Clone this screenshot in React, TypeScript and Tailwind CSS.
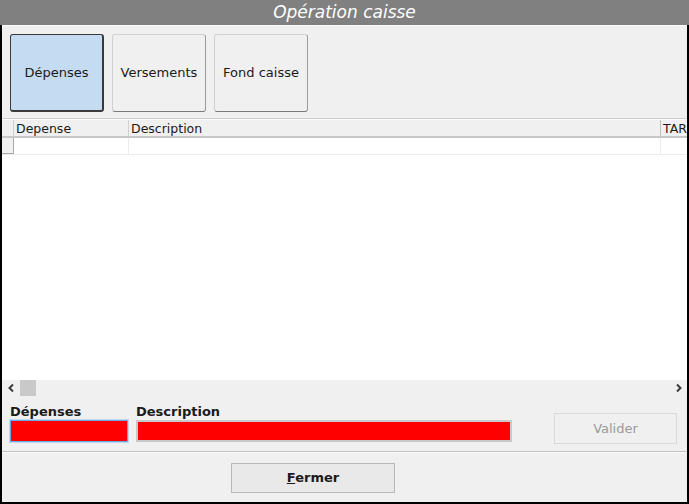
import React from "react";

const font = { fontFamily: '"DejaVu Sans", "Liberation Sans", sans-serif' };

const TabButton = ({ label, active }: { label: string; active?: boolean }) => (
  <button
    className={`w-[94px] h-[78px] rounded-[3px] text-[13px] text-[#1a1a1a] ${
      active
        ? "bg-[#c5dbf1] border border-[#3a3a3a] border-b-2 border-r-2"
        : "bg-[#f0f0f0] border border-[#d0d0d0] border-b-[#7a7a7a] border-r-[#9a9a9a]"
    }`}
  >
    {label}
  </button>
);

const Chevron = ({ dir }: { dir: "left" | "right" }) => (
  <svg width="8" height="10" viewBox="0 0 8 10">
    <polyline
      points={dir === "left" ? "6,1.5 2.5,5 6,8.5" : "2,1.5 5.5,5 2,8.5"}
      fill="none"
      stroke="#3c3c3c"
      strokeWidth="2"
    />
  </svg>
);

export default function App() {
  return (
    <div
      className="w-[689px] h-[504px] bg-black flex flex-col pl-[2px] pr-[2px] pb-[2px] overflow-hidden"
      style={font}
    >
      <div className="-mx-[2px] h-[25px] bg-[#808080] flex items-center justify-center text-white italic text-[17px]">
        Opération caisse
      </div>
      <div className="flex-1 bg-[#f0f0f0] flex flex-col border-t border-[#fbfbfb]">
        <div className="flex gap-[8px] px-[8px] pt-[8px] h-[93px] border-b border-[#cfcfcf]">
          <TabButton label="Dépenses" active />
          <TabButton label="Versements" />
          <TabButton label="Fond caisse" />
        </div>

        <div className="h-[261px] bg-white flex flex-col border-t border-[#fbfbfb] overflow-hidden">
          <div className="flex h-[18px] bg-[#f0f0f0] border-b-2 border-[#c8c8c8] text-[12.5px] text-[#1a1a1a] whitespace-nowrap">
            <div className="w-[12px] border-r border-[#d0d0d0]" />
            <div className="w-[115px] pl-[2px] pt-[1px] border-r border-[#d0d0d0] leading-[16px]">Depense</div>
            <div className="w-[532px] pl-[2px] pt-[1px] border-r border-[#c0c0c0] leading-[16px]">Description</div>
            <div className="pl-[2px] pt-[1px] leading-[16px]">TAR</div>
          </div>
          <div className="flex h-[17px] border-b border-[#ececec]">
            <div className="w-[12px] bg-[#f0f0f0] border-r border-[#a8a8a8] border-b border-b-[#a8a8a8]" />
            <div className="w-[115px] border-r border-[#ececec]" />
            <div className="w-[532px] border-r border-[#ececec]" />
            <div className="flex-1" />
          </div>
          <div className="flex-1" />
        </div>

        <div className="h-[16px] flex items-center pl-[5px] pr-[4px] bg-[#f0f0f0]">
          <div className="w-[13px] flex items-center">
            <Chevron dir="left" />
          </div>
          <div className="w-[16px] h-[16px] bg-[#c9c9c9]" />
          <div className="flex-1" />
          <Chevron dir="right" />
        </div>

        <div className="flex items-start px-[8px] pt-[8px] h-[56px] border-b border-[#c2c2c2]">
          <div className="flex flex-col w-[118px]">
            <span className="text-[13px] font-bold text-[#1a1a1a] leading-[16px]">Dépenses</span>
            <div className="h-[22px] bg-[#ff0000] border border-[#6fa8e8] outline outline-1 outline-[#bcd6f2]" />
          </div>
          <div className="flex flex-col w-[376px] ml-[8px]">
            <span className="text-[13px] font-bold text-[#1a1a1a] leading-[16px]">Description</span>
            <div className="h-[22px] bg-[#ff0000] border-2 border-[#c8c8c8]" />
          </div>
          <div className="flex-1" />
          <button className="w-[123px] h-[31px] mt-[9px] mr-[2px] border border-[#dadada] bg-[#f0f0f0] text-[13px] text-[#9a9a9a]">
            Valider
          </button>
        </div>

        <div className="flex-1 flex items-center pl-[229px] border-t border-[#fafafa]">
          <button className="w-[164px] h-[30px] border border-[#b8b8b8] bg-[#e9e9e9] text-[13px] font-bold text-[#1a1a1a]">
            <span className="underline">F</span>ermer
          </button>
        </div>
      </div>
    </div>
  );
}
